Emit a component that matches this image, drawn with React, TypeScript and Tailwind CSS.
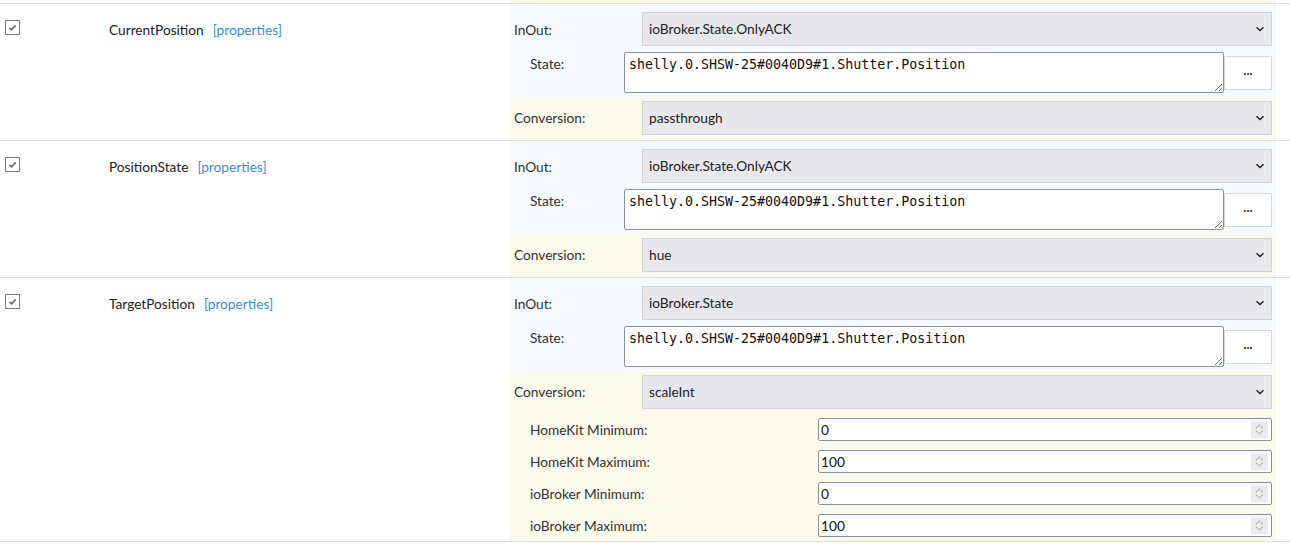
import React from "react";

const Chevron = () => (
  <svg width="10" height="6" viewBox="0 0 10 6" className="shrink-0">
    <path d="M1.5 1.2 L5 4.6 L8.5 1.2" fill="none" stroke="#222" strokeWidth="1.4" />
  </svg>
);

const Select = ({ value }: { value: string }) => (
  <div className="flex h-[34px] w-full items-center justify-between border border-[#d4d4d8] bg-[#e8e7ec] pl-[6px] pr-[6px] text-[13.7px] text-[#222]">
    <span className="pt-[1px]">{value}</span>
    <Chevron />
  </div>
);

const Spinner = () => (
  <div className="flex h-[17px] w-[17px] flex-col items-center justify-center gap-[1px] bg-[#ebebeb]">
    <svg width="9" height="5" viewBox="0 0 9 5">
      <path d="M1 4.2 L4.5 1 L8 4.2" fill="none" stroke="#9a9a9a" strokeWidth="1" />
    </svg>
    <svg width="9" height="5" viewBox="0 0 9 5">
      <path d="M1 0.8 L4.5 4 L8 0.8" fill="none" stroke="#9a9a9a" strokeWidth="1" />
    </svg>
  </div>
);

const NumRow = ({ label, value }: { label: string; value: string }) => (
  <div className="mt-[9px] flex h-[23px] items-center">
    <div className="w-[308px] pl-[20px] pt-[1px] text-[13.7px] text-[#333]">{label}</div>
    <div className="flex h-[23px] w-[454px] items-center justify-between rounded-[2px] border border-[#8f8f9d] bg-white pl-[2px] pr-[3px] text-[13.7px] text-[#111]">
      <span className="pt-[1px]">{value}</span>
      <Spinner />
    </div>
  </div>
);

const Check = () => (
  <div className="flex h-[15px] w-[15px] shrink-0 items-center justify-center border border-[#7d7d7d] bg-white">
    <svg width="13" height="13" viewBox="0 0 13 13">
      <path d="M3.5 6.8 L5.6 8.8 L9.6 4.4" fill="none" stroke="#6a6a6a" strokeWidth="1.8" />
    </svg>
  </div>
);

type RowProps = {
  name: string;
  inout: string;
  conversion: string;
  extra?: boolean;
};

const Row = ({ name, inout, conversion, extra }: RowProps) => (
  <div className="flex border-b border-[#dedede]">
    <div className="flex w-[510px] items-start pt-[16px]">
      <div className="ml-[5px]">
        <Check />
      </div>
      <div className="ml-[89px] mt-[1px] flex text-[13.7px] leading-[18px]">
        <span className="text-[#222]">{name}</span>
        <span className="ml-[9px] text-[#3a8dd0]">[properties]</span>
      </div>
    </div>
    <div className="flex w-[766px] flex-col">
      <div className="bg-[#f5f9fe] pb-[4px] pr-[4px] pt-[8px]">
        <div className="flex items-center">
          <div className="w-[132px] pl-[4px] pt-[2px] text-[13.7px] text-[#333]">InOut:</div>
          <div className="flex-1">
            <Select value={inout} />
          </div>
        </div>
        <div className="mt-[6px] flex items-start">
          <div className="mt-[3px] w-[114px] pl-[20px] text-[13.7px] leading-[18px] text-[#333]">State:</div>
          <textarea
            readOnly
            defaultValue="shelly.0.SHSW-25#0040D9#1.Shutter.Position"
            className="h-[41px] w-[600px] resize-y rounded-[2px] border border-[#8f8f9d] bg-white px-[4px] py-[4px] font-['DejaVu_Sans_Mono',monospace] text-[13.3px] leading-[15px] text-[#111] outline-none"
          />
          <div className="mt-[4px] flex h-[34px] w-[48px] items-center justify-center border border-[#d6d6d6] bg-white text-[13px] font-bold leading-none text-[#333]">
            <span className="-mt-[5px]">...</span>
          </div>
        </div>
      </div>
      <div className={`bg-[#fafaea] pr-[4px] pt-[4px] ${extra ? "pb-[4px]" : "pb-[5px]"}`}>
        <div className="flex items-center">
          <div className="w-[132px] pl-[4px] pt-[1px] text-[13.7px] text-[#333]">Conversion:</div>
          <div className="flex-1">
            <Select value={conversion} />
          </div>
        </div>
        {extra && (
          <>
            <NumRow label="HomeKit Minimum:" value="0" />
            <NumRow label="HomeKit Maximum:" value="100" />
            <NumRow label="ioBroker Minimum:" value="0" />
            <NumRow label="ioBroker Maximum:" value="100" />
          </>
        )}
      </div>
    </div>
  </div>
);

export default function App() {
  return (
    <div className="h-[550px] w-[1290px] overflow-hidden bg-white font-['Lato','Noto_Sans',sans-serif] text-[13.7px] text-[#222]">
      <div className="flex h-[4px] border-b border-[#dedede]">
        <div className="w-[510px]" />
        <div className="w-[766px] bg-[#fafaea]" />
      </div>
      <Row name="CurrentPosition" inout="ioBroker.State.OnlyACK" conversion="passthrough" />
      <Row name="PositionState" inout="ioBroker.State.OnlyACK" conversion="hue" />
      <Row name="TargetPosition" inout="ioBroker.State" conversion="scaleInt" extra />
    </div>
  );
}
